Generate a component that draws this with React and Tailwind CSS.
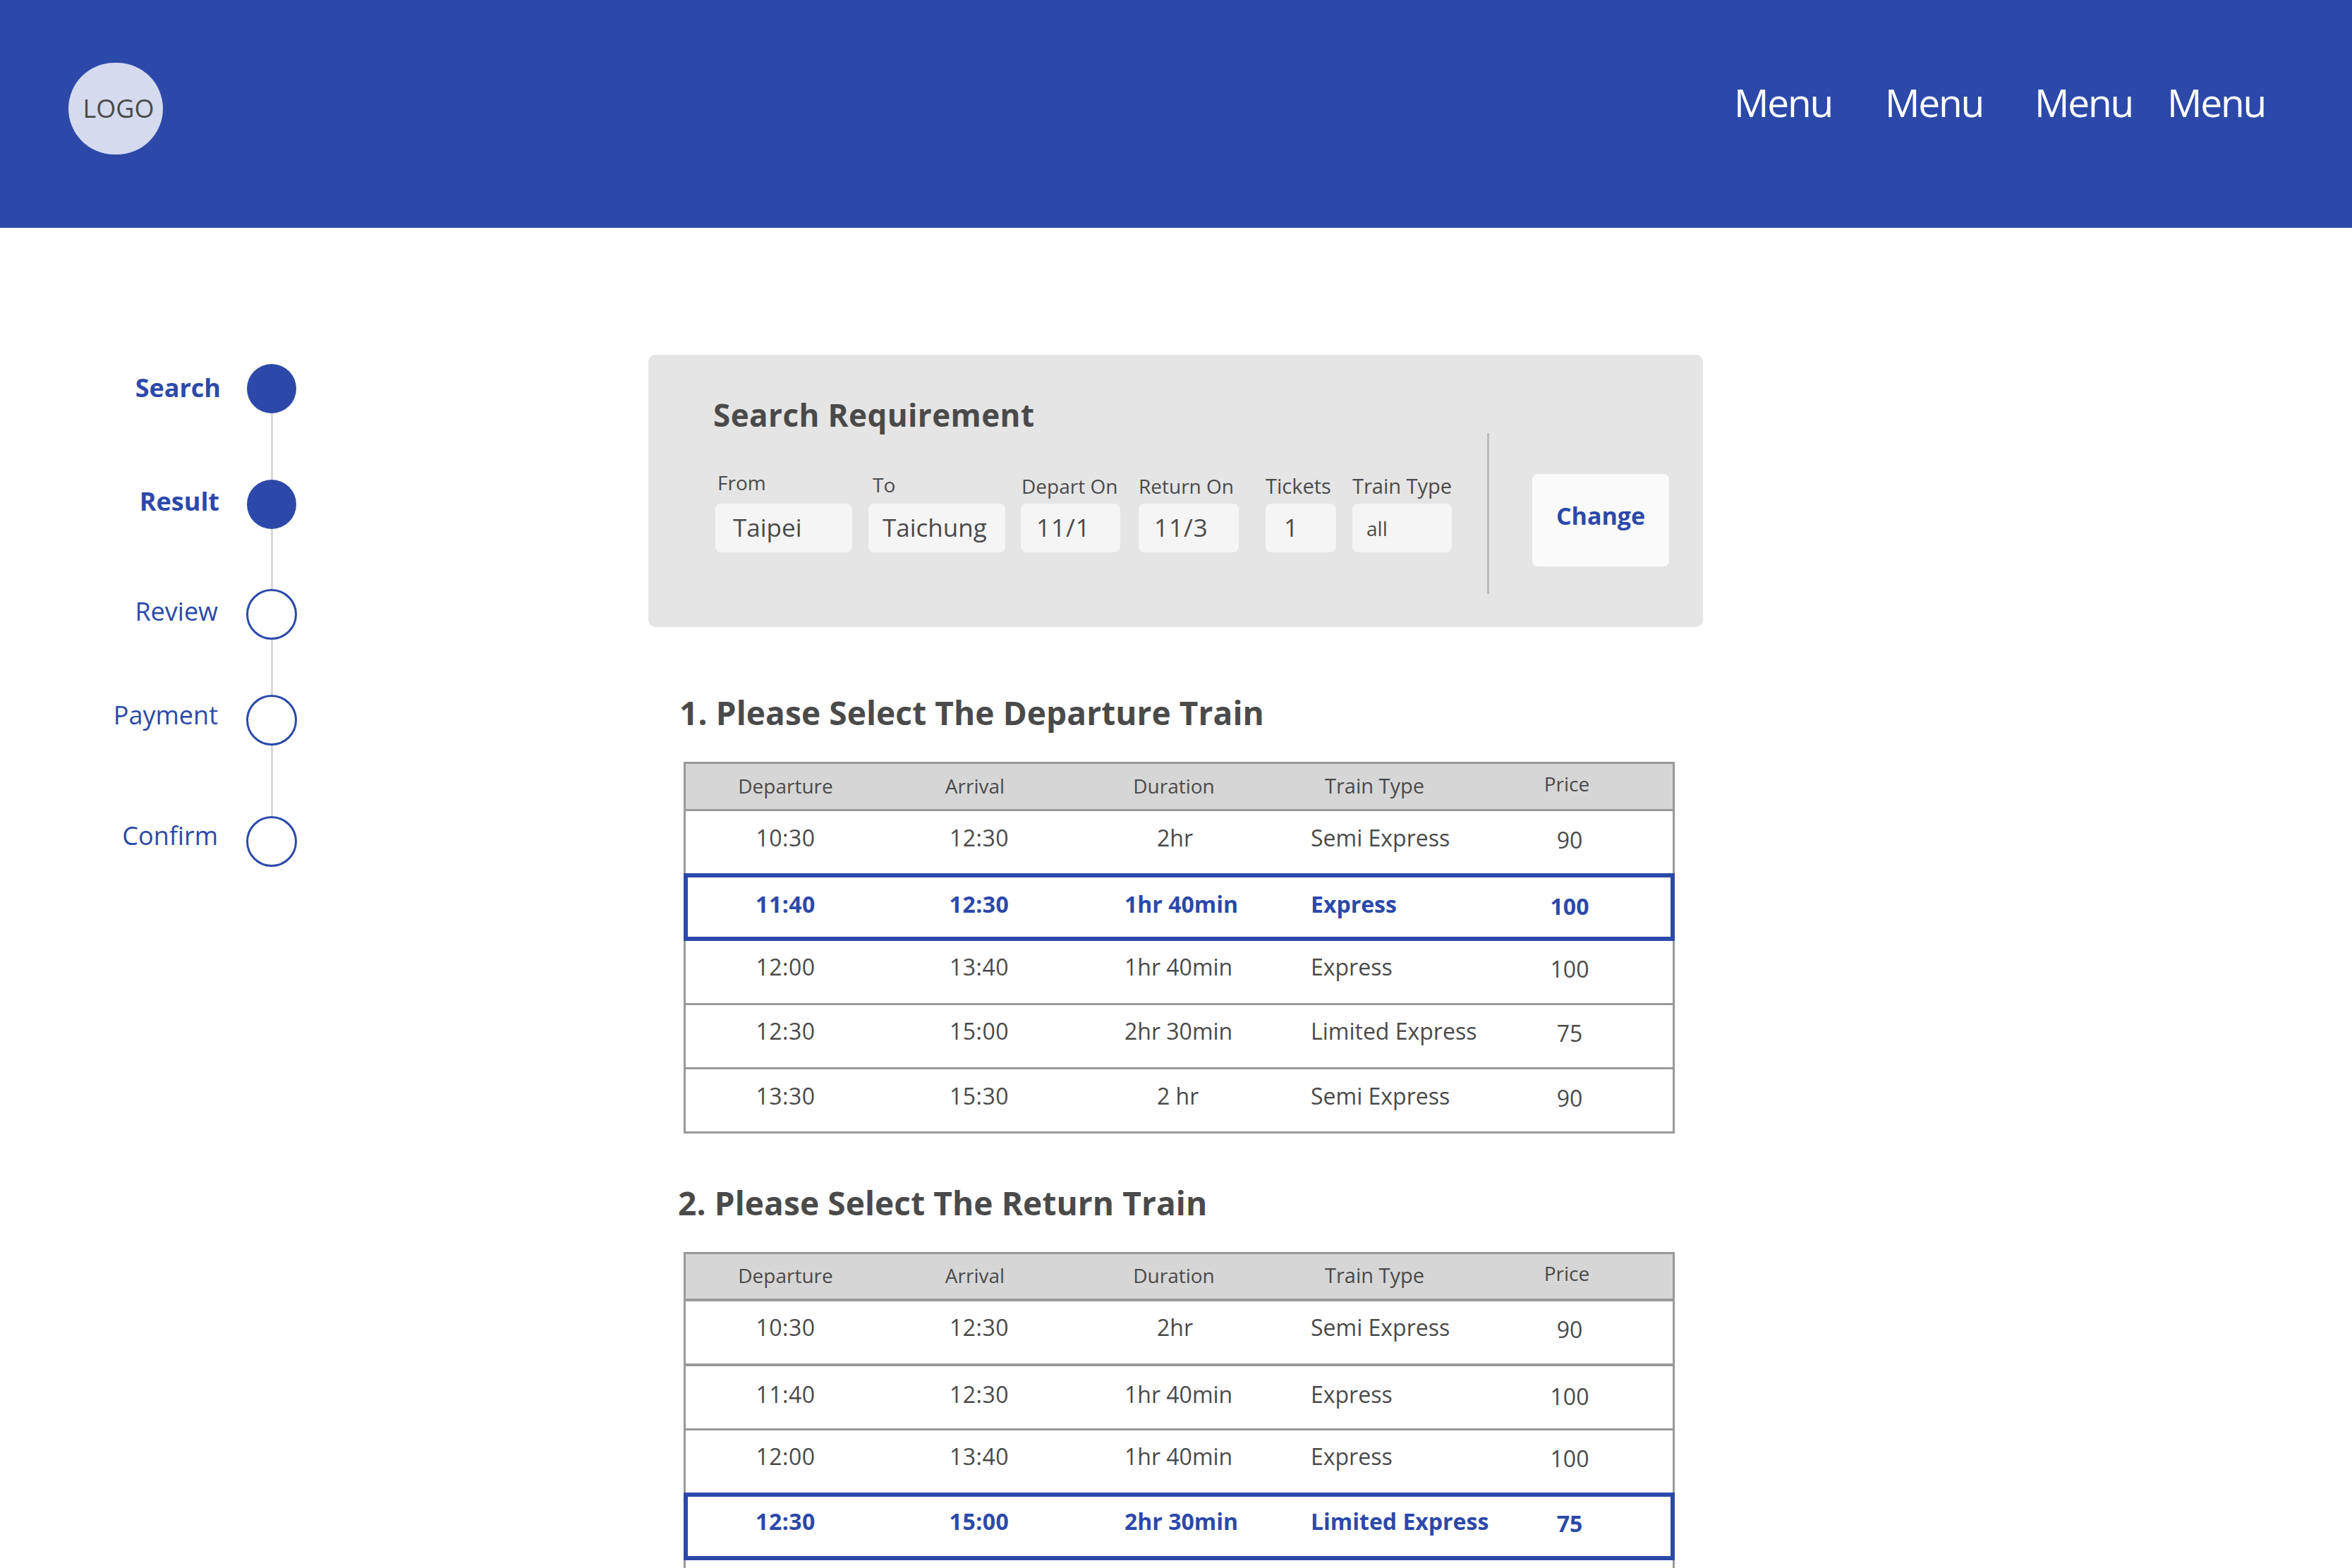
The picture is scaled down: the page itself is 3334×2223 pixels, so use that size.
import React from 'react';

const menus = [
  { id: 1, gap: 'ml-0' },
  { id: 2, gap: 'ml-[74px]' },
  { id: 3, gap: 'ml-[72px]' },
  { id: 4, gap: 'ml-[48px]' },
];

const steps = [
  { name: 'Search', done: true, line: 'h-[94px]', label: 'font-bold pr-[37px] pb-[3px]' },
  { name: 'Result', done: true, line: 'h-[85px]', label: 'font-bold pr-[39px] pb-[8px]' },
  { name: 'Review', done: false, line: 'h-[78px]', label: 'pr-[41px] pb-[7px]' },
  { name: 'Payment', done: false, line: 'h-[100px]', label: 'pr-[41px] pb-[12px]' },
  { name: 'Confirm', done: false, line: '', label: 'pr-[41px] pb-[14px]' },
];

const fields = [
  { label: 'From', value: 'Taipei', box: 'w-[194px] ml-0', labelClass: 'pl-[3px] pb-[16px] text-[28px]', valueClass: 'pl-[25px] text-[35px]' },
  { label: 'To', value: 'Taichung', box: 'w-[194px] ml-[23px]', labelClass: 'pl-[6px] pb-[11px] text-[28px]', valueClass: 'pl-[20px] text-[35px]' },
  { label: 'Depart On', value: '11/1', box: 'w-[141px] ml-[22px]', labelClass: 'pl-[1px] pb-[6px] text-[28px]', valueClass: 'pl-[22px] text-[35px] tracking-[1px]' },
  { label: 'Return On', value: '11/3', box: 'w-[142px] ml-[26px]', labelClass: 'pb-[6px] text-[28px]', valueClass: 'pl-[22px] text-[35px] tracking-[1px]' },
  { label: 'Tickets', value: '1', box: 'w-[100px] ml-[38px]', labelClass: 'pb-[6px] text-[29px]', valueClass: 'pl-[26px] text-[35px]' },
  { label: 'Train Type', value: 'all', box: 'w-[141px] ml-[23px]', labelClass: 'pb-[6px] text-[29px]', valueClass: 'pl-[20px] text-[28px]' },
];

const departRows = [
  { dep: '10:30', arr: '12:30', dur: '2hr', type: 'Semi Express', price: '90', box: 'h-[88px] pt-[18px]' },
  { dep: '11:40', arr: '12:30', dur: '1hr 40min', type: 'Express', price: '100', selected: true, box: 'h-[96px] pt-[18px]' },
  { dep: '12:00', arr: '13:40', dur: '1hr 40min', type: 'Express', price: '100', box: 'h-[91px] pt-[17px] border-b-[3px]' },
  { dep: '12:30', arr: '15:00', dur: '2hr 30min', type: 'Limited Express', price: '75', box: 'h-[91px] pt-[17px] border-b-[3px]' },
  { dep: '13:30', arr: '15:30', dur: '2 hr', type: 'Semi Express', price: '90', box: 'h-[88px] pt-[18px]' },
];

const returnRows = [
  { dep: '10:30', arr: '12:30', dur: '2hr', type: 'Semi Express', price: '90', box: 'h-[92px] pt-[17px] border-b-[4px]' },
  { dep: '11:40', arr: '12:30', dur: '1hr 40min', type: 'Express', price: '100', box: 'h-[91px] pt-[20px] border-b-[3px]' },
  { dep: '12:00', arr: '13:40', dur: '1hr 40min', type: 'Express', price: '100', box: 'h-[88px] pt-[17px]' },
  { dep: '12:30', arr: '15:00', dur: '2hr 30min', type: 'Limited Express', price: '75', selected: true, box: 'h-[96px] pt-[15px]' },
];

const Row = ({ row }) => {
  const weight = row.selected ? 'font-bold text-[#2c49a9]' : 'text-[#4a4a4a]';
  const cells = (
    <div className={`flex text-[32px] leading-[40px] whitespace-nowrap ${weight}`}>
      <div className="w-[283px] text-center tracking-[0.5px]">{row.dep}</div>
      <div className="w-[266px] text-center tracking-[0.5px]">{row.arr}</div>
      <div className={`w-[286px] ${row.dur.length > 4 ? 'pl-[73px]' : 'pl-[119px]'}`}>{row.dur}</div>
      <div className="w-[293px] pl-[51px]">{row.type}</div>
      <div className="w-[250px] mt-[3px] text-center">{row.price}</div>
    </div>
  );

  if (row.selected) {
    return (
      <div className={`-mx-[3px] border-x-[6px] border-y-[6px] border-[#2c49a9] bg-white ${row.box}`}>
        <div className="-mx-[3px]">{cells}</div>
      </div>
    );
  }
  return <div className={`border-[#999999] ${row.box}`}>{cells}</div>;
};

const TrainTable = ({ rows, head, tail }) => (
  <div className={`ml-[3px] w-[1405px] border-x-[3px] border-t-[3px] border-[#999999] ${tail}`}>
    <div className={`flex h-[67px] border-[#999999] bg-[#d6d6d6] text-[28px] leading-[40px] text-[#4a4a4a] whitespace-nowrap ${head}`}>
      <div className="w-[283px] text-center">Departure</div>
      <div className="w-[266px] pr-[12px] text-center">Arrival</div>
      <div className="w-[286px] text-center">Duration</div>
      <div className="w-[293px] pl-[71px] text-[29px]">Train Type</div>
      <div className="w-[250px] -mt-[3px] pr-[8px] text-center">Price</div>
    </div>
    {rows.map(row => <Row key={row.dep} row={row} />)}
  </div>
);

export default function App() {
  return (
    <div className="h-[2223px] w-[3334px] overflow-hidden bg-white font-['Open_Sans',sans-serif]">
      {/* Header */}
      <header className="flex h-[323px] items-start justify-between bg-[#2c49a9] pl-[97px] pr-[122px]">
        <div className="mt-[89px] flex h-[130px] w-[134px] items-center justify-center rounded-full bg-[#d5daef] pl-[8px] text-[36px] text-[#4a4a4a]">
          LOGO
        </div>
        <nav className="mt-[115px] flex text-[55px] leading-[60px] text-white">
          {menus.map(menu => (
            <div key={menu.id} className={`w-[140px] tracking-[-2.2px] ${menu.gap}`}>Menu</div>
          ))}
        </nav>
      </header>

      <div className="flex">
        {/* Progress steps */}
        <aside className="w-[919px] pl-[100px] pt-[193px]">
          {steps.map(step => (
            <div key={step.name} className="flex items-start">
              <div className={`flex h-[70px] w-[250px] items-center justify-end text-[36px] text-[#2c49a9] ${step.label}`}>
                {step.name}
              </div>
              <div className="flex w-[70px] flex-col items-center">
                <div className={`shrink-0 rounded-full ${step.done ? 'h-[70px] w-[70px] bg-[#2c49a9]' : 'h-[72px] w-[72px] border-[3px] border-[#2c49a9] bg-white'}`}></div>
                {step.line && <div className={`w-[3px] bg-[#d8d8d8] ${step.line}`}></div>}
              </div>
            </div>
          ))}
        </aside>

        <main className="w-[1495px] pt-[180px]">
          {/* Search summary */}
          <section className="flex h-[386px] rounded-[10px] bg-[#e5e5e5]">
            <div className="w-[1189px] pl-[92px] pt-[55px]">
              <h2 className="text-[44px] font-bold leading-[60px] tracking-[0.4px] text-[#4a4a4a]">Search Requirement</h2>
              <div className="mt-[52px] flex pl-[3px]">
                {fields.map(field => (
                  <div key={field.label} className={field.box}>
                    <div className="flex h-[44px] items-center leading-[36px] text-[#4a4a4a] whitespace-nowrap">
                      <span className={field.labelClass}>{field.label}</span>
                    </div>
                    <div className={`flex h-[69px] items-center rounded-[8px] bg-[#f5f5f5] text-[#4a4a4a] ${field.valueClass}`}>
                      {field.value}
                    </div>
                  </div>
                ))}
              </div>
            </div>
            <div className="mt-[111px] h-[228px] w-[3px] bg-[#bbbbbb]"></div>
            <button className="ml-[61px] mt-[169px] flex h-[131px] w-[194px] items-center justify-center rounded-[8px] bg-[#fafafa] pb-[12px] text-[34px] font-bold text-[#2c49a9]">
              Change
            </button>
          </section>

          {/* Departure */}
          <section className="pl-[47px]">
            <h2 className="-ml-[3px] mt-[89px] text-[46px] font-bold leading-[64px] tracking-[0.1px] text-[#4a4a4a]">1. Please Select The Departure Train</h2>
            <div className="mt-[38px]">
              <TrainTable rows={departRows} head="pt-[11px] border-b-[3px]" tail="border-b-[3px]" />
            </div>
          </section>

          {/* Return */}
          <section className="pl-[47px]">
            <h2 className="-ml-[5px] mt-[66px] text-[46px] font-bold leading-[64px] tracking-[0.1px] text-[#4a4a4a]">2. Please Select The Return Train</h2>
            <div className="mt-[38px]">
              <TrainTable rows={returnRows} head="pt-[10px] border-b-[4px]" tail="min-h-[500px]" />
            </div>
          </section>
        </main>
      </div>
    </div>
  );
}
